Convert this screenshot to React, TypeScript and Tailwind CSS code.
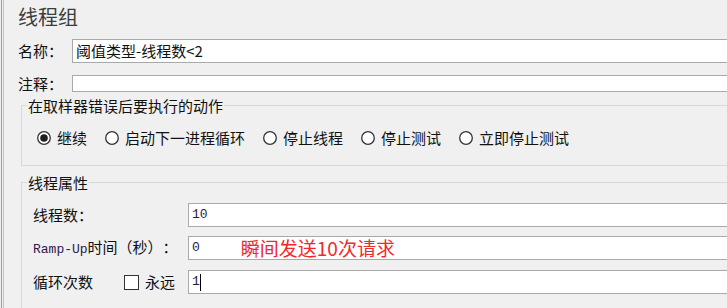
import React from "react";

const cjk = "[font-family:'Noto_Sans_CJK_SC','Noto_Sans',sans-serif]";
const mono = "[font-family:'Liberation_Mono','DejaVu_Sans_Mono',monospace]";

const Radio = ({ checked }: { checked?: boolean }) => (
  <svg width="14" height="14" viewBox="0 0 14 14" className="shrink-0">
    <circle cx="7" cy="7" r="6.3" fill="#ffffff" stroke="#333333" strokeWidth="1.3" />
    {checked && <circle cx="7" cy="7" r="3.8" fill="#1f1f1f" />}
  </svg>
);

const options = [
  { label: "继续", checked: true },
  { label: "启动下一进程循环" },
  { label: "停止线程" },
  { label: "停止测试" },
  { label: "立即停止测试" },
];

const Field = ({ children, h = "h-[24px]" }: { children?: React.ReactNode; h?: string }) => (
  <div className={`flex-1 ${h} flex items-center bg-white border border-[#a9a9a9] pl-[3px]`}>
    {children}
  </div>
);

export default function App() {
  return (
    <div
      className={`w-[727px] h-[308px] overflow-hidden bg-[#f0f0f0] flex text-[15px] text-[#111] [text-spacing-trim:space-all] ${cjk}`}
    >
      <div className="w-[1px] shrink-0" />
      <div className="w-[1px] shrink-0 bg-[#9a9a9a]" />
      <div className="w-[1px] shrink-0" />
      <div className="w-[1px] shrink-0 bg-[#c4c4c4]" />

      <div className="w-[760px] shrink-0 pl-[14px] pt-[7px]">
        <div className="text-[20px] leading-[20px] text-[#3c3c3c]">线程组</div>

        <div className="flex items-center mt-[12px]">
          <span className="w-[54px] leading-[16px]">名称：</span>
          <Field>
            <span className="leading-[16px]">阈值类型-线程数&lt;2</span>
          </Field>
        </div>

        <div className="flex items-center mt-[12px]">
          <span className="w-[54px] leading-[16px]">注释：</span>
          <Field h="h-[17px]" />
        </div>

        <fieldset className="ml-[3px] mt-[5px] border border-[#d8d8d8]">
          <legend className="ml-[5px] px-[1px] leading-[17px]">在取样器错误后要执行的动作</legend>
          <div className="flex items-center gap-[18px] h-[16px] ml-[15px] mt-[16px] mb-[19px]">
            {options.map((o) => (
              <div key={o.label} className="flex items-center gap-[6px]">
                <Radio checked={o.checked} />
                <span className="leading-[16px]">{o.label}</span>
              </div>
            ))}
          </div>
        </fieldset>

        <fieldset className="ml-[3px] mt-[8px] h-[200px] border border-[#d8d8d8]">
          <legend className="ml-[5px] px-[1px] leading-[17px]">线程属性</legend>

          <div className="pl-[11px] pt-[12px]">
            <div className="flex items-center">
              <span className="w-[155px] leading-[16px]">线程数：</span>
              <Field>
                <span className={`${mono} text-[13px] text-[#2e1848]`}>10</span>
              </Field>
            </div>

            <div className="flex items-center mt-[9px]">
              <span className="w-[155px] leading-[16px]">
                <span className={`${mono} text-[13px] text-[#2e1848]`}>Ramp-Up</span>时间（秒）：
              </span>
              <Field>
                <span className={`${mono} text-[13px] text-[#2e1848]`}>0</span>
                <span className="ml-[41px] text-[19px] leading-[22px] text-[#f0282d]">瞬间发送10次请求</span>
              </Field>
            </div>

            <div className="flex items-center mt-[10px]">
              <div className="w-[155px] flex items-center">
                <span className="w-[91px] leading-[16px]">循环次数</span>
                <span className="w-[15px] h-[15px] bg-white border border-[#333]" />
                <span className="ml-[6px] leading-[16px]">永远</span>
              </div>
              <Field>
                <span className={`${mono} text-[13px] text-[#2e1848]`}>1</span>
                <span className="w-[1px] h-[17px] bg-black" />
              </Field>
            </div>
          </div>
        </fieldset>
      </div>
    </div>
  );
}
